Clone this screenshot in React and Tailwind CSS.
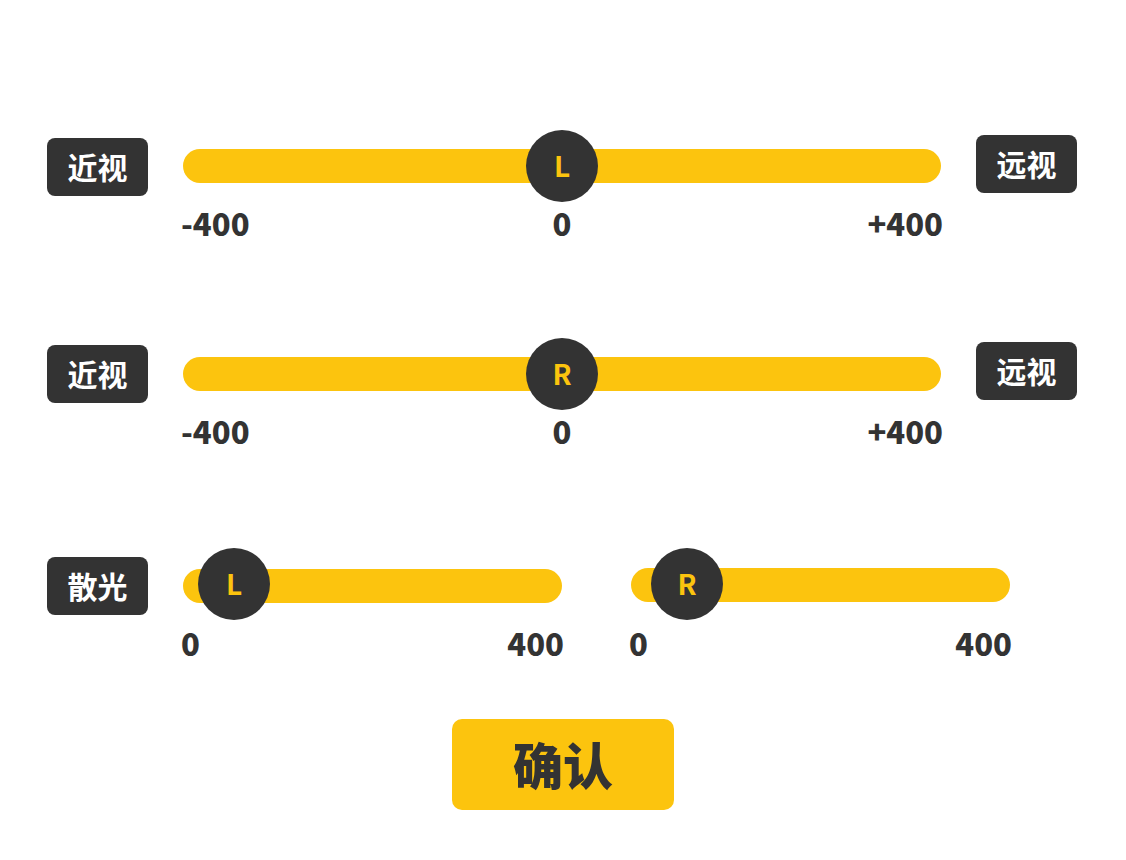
const YELLOW = 'bg-[#fcc40e]';

function Badge({ children, className = '' }) {
    return (
        <div className={`w-[101px] h-[58px] shrink-0 rounded-lg bg-[#333333] text-white text-[30px] font-bold flex items-center justify-center leading-none pb-[2px] ${className}`}>
            {children}
        </div>
    );
}

// value -> knob centre as a percentage of the track
function Slider({ letter, pct, width, labels, labelGap = 'mt-[5px]', trackTop = 'pt-[19px]' }) {
    return (
        <div className="shrink-0" style={{ width }}>
            <div className={`relative h-[72px] ${trackTop}`}>
                <div className={`h-[34px] rounded-full ${YELLOW}`} />
                <div
                    className="absolute top-0 w-[72px] h-[72px] rounded-full bg-[#333333] flex items-center justify-center pb-[3px] text-[#fcc40e] text-[28px] font-bold leading-none"
                    style={{ left: `calc(${pct}% - 36px)` }}>
                    {letter}
                </div>
            </div>
            <div className={`${labelGap} -mx-[2px] grid ${labels.length === 3 ? 'grid-cols-3' : 'grid-cols-2'} text-[31px] leading-[32px] font-black text-[#333333]`}>
                {labels.map((l, i) => (
                    <span key={i} className={i === 0 ? 'text-left' : i === labels.length - 1 ? 'text-right' : 'text-center'}>{l}</span>
                ))}
            </div>
        </div>
    );
}

export default function App() {
    return (
        <div className="w-[1126px] h-[860px] bg-white pt-[130px]" style={{ fontFamily: '"Noto Sans CJK SC", "Noto Sans", sans-serif' }}>
            {/* left eye */}
            <div className="flex items-start pl-[47px]">
                <Badge className="mt-[8px]">近视</Badge>
                <div className="ml-[35px]">
                    <Slider letter="L" pct={50} width={758} labels={['-400', '0', '+400']} />
                </div>
                <Badge className="ml-[35px] mt-[5px]">远视</Badge>
            </div>

            {/* right eye */}
            <div className="flex items-start pl-[47px] mt-[99px]">
                <Badge className="mt-[7px]">近视</Badge>
                <div className="ml-[35px]">
                    <Slider letter="R" pct={50} width={758} labels={['-400', '0', '+400']} />
                </div>
                <Badge className="ml-[35px] mt-[4px]">远视</Badge>
            </div>

            {/* astigmatism */}
            <div className="flex items-start pl-[47px] mt-[101px]">
                <Badge className="mt-[9px]">散光</Badge>
                <div className="ml-[35px] flex gap-[69px]">
                    <Slider letter="L" pct={13.5} width={379} labels={['0', '400']} labelGap="mt-[7px]" trackTop="pt-[21px]" />
                    <Slider letter="R" pct={14.8} width={379} labels={['0', '400']} labelGap="mt-[7px]" trackTop="pt-[20px]" />
                </div>
            </div>

            <div className="flex justify-center mt-[60px]">
                <button className={`w-[222px] h-[91px] rounded-[10px] ${YELLOW} text-[#333333] text-[50px] font-black leading-none flex items-center justify-center pb-[4px]`}>
                    确认
                </button>
            </div>
        </div>
    );
}
